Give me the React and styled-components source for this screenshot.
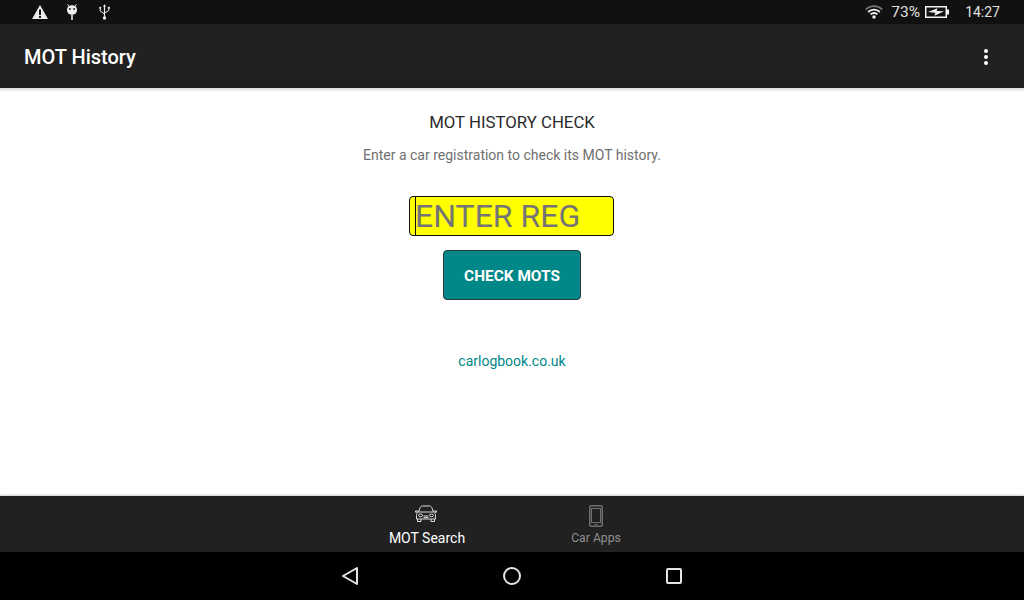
import styled, { createGlobalStyle } from "styled-components";

const GlobalStyle = createGlobalStyle`
  html, body {
    margin: 0;
    padding: 0;
    background: #fff;
  }
  * {
    box-sizing: border-box;
  }
`;

function WarningIcon() {
  return (
    <svg width="18" height="16" viewBox="0 0 18 16">
      <path d="M9 1 L17 15 H1 Z" fill="#eee" />
      <rect x="8" y="5.5" width="2" height="5.5" fill="#111" />
      <rect x="8" y="12" width="2" height="2" fill="#111" />
    </svg>
  );
}

function AndroidIcon() {
  return (
    <svg width="12" height="16" viewBox="0 0 12 16">
      <path d="M1.6 0.4 L3 2.4 M10.4 0.4 L9 2.4" stroke="#eee" strokeWidth="1" />
      <path d="M1 5.5 A5 4.2 0 0 1 11 5.5 V6.5 A5 4.2 0 0 1 1 6.5 Z" fill="#eee" />
      <circle cx="3.9" cy="5" r="0.9" fill="#111" />
      <circle cx="8.1" cy="5" r="0.9" fill="#111" />
      <rect x="5" y="10" width="2" height="6" fill="#bbb" />
    </svg>
  );
}

function UsbIcon() {
  return (
    <svg width="15" height="16" viewBox="-4 0 15 16" fill="none" stroke="#eee" strokeWidth="1">
      <path d="M5.5 2 V13" strokeWidth="1.2" />
      <path d="M5.5 0.2 L7.2 2.6 H3.8 Z" fill="#eee" stroke="none" />
      <circle cx="5.5" cy="14" r="1.7" fill="#eee" stroke="none" />
      <path d="M1.2 4.5 V7 L5.5 10" />
      <path d="M9.8 4.5 V6.5 L5.5 9" />
      <circle cx="1.2" cy="3.8" r="1.1" fill="#eee" stroke="none" />
      <rect x="8.8" y="2.8" width="2" height="2" fill="#eee" stroke="none" />
    </svg>
  );
}

function WifiIcon() {
  return (
    <svg width="18" height="14" viewBox="0 0 18 14" fill="none">
      <path d="M0.8 4.6 A11.6 11.6 0 0 1 17.2 4.6" stroke="#777" strokeWidth="1.8" />
      <path d="M3.2 7 A8.2 8.2 0 0 1 14.8 7" stroke="#f2f2f2" strokeWidth="1.8" />
      <path d="M5.6 9.4 A4.8 4.8 0 0 1 12.4 9.4" stroke="#f2f2f2" strokeWidth="1.8" />
      <circle cx="9" cy="12" r="1.7" fill="#f2f2f2" />
    </svg>
  );
}

function BatteryIcon() {
  return (
    <svg width="24" height="12" viewBox="0 0 24 12">
      <rect x="0.75" y="0.75" width="20.5" height="10.5" fill="none" stroke="#f2f2f2" strokeWidth="1.5" />
      <rect x="22" y="3.5" width="2" height="5" fill="#f2f2f2" />
      <path d="M3 6 L12.5 2.2 L11.6 5 L19 5.2 L9.5 9.8 L10.4 6.8 Z" fill="#f2f2f2" />
    </svg>
  );
}

function CarIcon() {
  return (
    <svg width="24" height="18" viewBox="0 0 24 18" fill="none" stroke="#ddd" strokeWidth="1">
      <path d="M4.5 7 L6.2 2.6 C6.6 1.6 7.4 1 8.5 1 H15.5 C16.6 1 17.4 1.6 17.8 2.6 L19.5 7" />
      <path d="M4.5 7 H19.5 C21 8 21.5 9 21.5 10.5 V14 H2.5 V10.5 C2.5 9 3 8 4.5 7 Z" />
      <path d="M4.5 6 H1.5 V7.2 H3.5 M19.5 6 H22.5 V7.2 H20.5" />
      <path d="M3.5 14 V16.5 H7 V14 M17 14 V16.5 H20.5 V14" />
      <ellipse cx="6.5" cy="10.4" rx="2" ry="1.4" />
      <ellipse cx="17.5" cy="10.4" rx="2" ry="1.4" />
      <path d="M9.5 11 H14.5 M9.5 12.6 H14.5" />
    </svg>
  );
}

function PhoneIcon() {
  return (
    <svg width="14" height="22" viewBox="0 0 14 22" fill="none" stroke="#6f6f6f">
      <rect x="0.75" y="0.75" width="12.5" height="20.5" rx="1.5" strokeWidth="1.5" />
      <rect x="2.5" y="3.5" width="9" height="14" strokeWidth="1" />
      <path d="M5.5 19.5 H8.5" strokeWidth="1" />
    </svg>
  );
}

function BackIcon() {
  return (
    <svg width="17" height="20" viewBox="0 0 17 20" fill="none">
      <path d="M15 2 V18 L1 10 Z" stroke="#e4e4e4" strokeWidth="2" strokeLinejoin="round" />
    </svg>
  );
}

function HomeIcon() {
  return (
    <svg width="19" height="18" viewBox="0 0 19 18" fill="none">
      <circle cx="9" cy="9" r="8" stroke="#e4e4e4" strokeWidth="2" />
    </svg>
  );
}

function RecentIcon() {
  return (
    <svg width="16" height="16" viewBox="0 0 16 16" fill="none">
      <rect x="1" y="1" width="14" height="14" rx="1" stroke="#e4e4e4" strokeWidth="2" />
    </svg>
  );
}

export default function App() {
  return (
    <Screen>
      <GlobalStyle />
      <StatusBar>
        <StatusLeft>
          <WarningIcon />
          <AndroidIcon />
          <UsbIcon />
        </StatusLeft>
        <StatusRight>
          <WifiIcon />
          <BatteryText>73%</BatteryText>
          <BatteryIcon />
          <Clock>14:27</Clock>
        </StatusRight>
      </StatusBar>

      <AppBar>
        <AppTitle>MOT History</AppTitle>
        <MenuButton>
          <MenuDot />
          <MenuDot />
          <MenuDot />
        </MenuButton>
      </AppBar>

      <Content>
        <Heading>MOT HISTORY CHECK</Heading>
        <SubHeading>Enter a car registration to check its MOT history.</SubHeading>
        <RegInput>
          <Caret />
          <RegPlaceholder>ENTER REG</RegPlaceholder>
        </RegInput>
        <CheckButton>CHECK MOTS</CheckButton>
        <SiteLink>carlogbook.co.uk</SiteLink>
      </Content>

      <BottomTabs>
        <Tab>
          <TabIcon $shift="2px">
            <CarIcon />
          </TabIcon>
          <TabLabel $active>MOT Search</TabLabel>
        </Tab>
        <Tab>
          <TabIcon>
            <PhoneIcon />
          </TabIcon>
          <TabLabel>Car Apps</TabLabel>
        </Tab>
      </BottomTabs>

      <NavBar>
        <BackIcon />
        <HomeIcon />
        <RecentIcon />
      </NavBar>
    </Screen>
  );
}

const Screen = styled.div`
  width: 1024px;
  height: 600px;
  display: flex;
  flex-direction: column;
  overflow: hidden;
  font-family: Roboto, "Liberation Sans", sans-serif;
  background: #fff;
`;

const StatusBar = styled.div`
  height: 24px;
  flex: none;
  background: #111;
  display: flex;
  justify-content: space-between;
  align-items: center;
  padding: 0 24px 0 31px;
`;

const StatusLeft = styled.div`
  display: flex;
  align-items: center;
  gap: 17px;
`;

const StatusRight = styled.div`
  display: flex;
  align-items: center;
  color: #e0e0e0;
  font-size: 14px;
`;

const BatteryText = styled.span`
  margin: 0 5px 0 8px;
  font-size: 15.5px;
`;

const Clock = styled.span`
  margin-left: 16px;
`;

const AppBar = styled.header`
  height: 64px;
  flex: none;
  background: #212121;
  display: flex;
  justify-content: space-between;
  align-items: center;
  padding: 2px 36px 0 24px;
`;

const AppTitle = styled.h1`
  margin: 0;
  color: #fff;
  font-size: 20px;
  font-weight: 500;
`;

const MenuButton = styled.div`
  display: flex;
  flex-direction: column;
  gap: 2px;
`;

const MenuDot = styled.span`
  width: 4px;
  height: 4px;
  border-radius: 50%;
  background: #fff;
`;

const Content = styled.main`
  flex: 1;
  display: flex;
  flex-direction: column;
  align-items: center;
  padding-top: 24px;
  background: linear-gradient(#d9d9d9, #f4f4f4 3px, #fff 4px);
`;

const Heading = styled.h2`
  margin: 0;
  font-size: 16.8px;
  line-height: 20px;
  font-weight: 400;
  color: #2a2a2a;
`;

const SubHeading = styled.p`
  margin: 14px 0 0;
  font-size: 14px;
  line-height: 18px;
  color: #707070;
`;

const RegInput = styled.div`
  margin: 32px 1px 0 0;
  width: 205px;
  height: 40px;
  background: #ff0;
  border: 1px solid #111;
  border-radius: 4px;
  display: flex;
  align-items: stretch;
  padding-left: 5px;
`;

const Caret = styled.span`
  width: 1px;
  background: #111;
  flex: none;
`;

const RegPlaceholder = styled.span`
  margin-left: -1px;
  font-size: 32px;
  line-height: 38px;
  color: #757575;
`;

const CheckButton = styled.button`
  margin-top: 14px;
  width: 138px;
  height: 50px;
  padding: 2px 0 0;
  background: #008888;
  border: 1px solid #2a3a3a;
  border-radius: 4px;
  color: #fff;
  font-family: inherit;
  font-size: 15.4px;
  font-weight: 700;
`;

const SiteLink = styled.a`
  margin-top: 52px;
  font-size: 14px;
  line-height: 18px;
  color: #008888;
`;

const BottomTabs = styled.nav`
  height: 56px;
  flex: none;
  background: #212121;
  display: flex;
  justify-content: center;
  padding-right: 1px;
  box-shadow: 0 -1px 2px rgba(0, 0, 0, 0.2);
  position: relative;
`;

const Tab = styled.div`
  width: 169px;
  display: flex;
  flex-direction: column;
  align-items: center;
  padding-top: 9px;
`;

const TabIcon = styled.div`
  height: 22px;
  display: flex;
  margin-right: ${(p) => p.$shift || "0"};
`;

const TabLabel = styled.span`
  margin-top: 3px;
  font-size: ${(p) => (p.$active ? "14px" : "12.2px")};
  line-height: 16px;
  color: ${(p) => (p.$active ? "#fff" : "#8f8f8f")};
`;

const NavBar = styled.div`
  height: 48px;
  flex: none;
  background: #000;
  display: flex;
  justify-content: center;
  align-items: center;
  gap: 144px;
`;
